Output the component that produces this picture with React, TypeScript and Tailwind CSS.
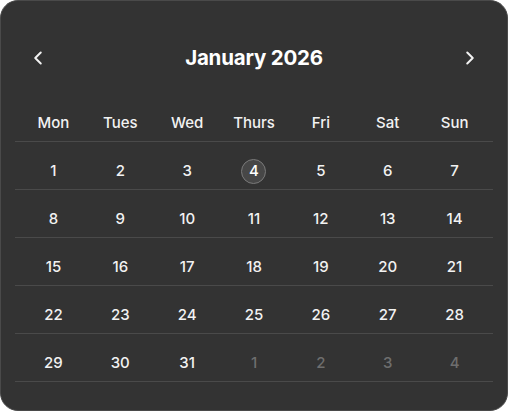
import React from 'react';
import { ChevronLeft, ChevronRight } from 'lucide-react';

const days = ['Mon', 'Tues', 'Wed', 'Thurs', 'Fri', 'Sat', 'Sun'];

// jan 2026 starts on a thursday, but the grid here starts at 1 on monday
const weeks: { n: number; muted?: boolean }[][] = [
  [1, 2, 3, 4, 5, 6, 7].map((n) => ({ n })),
  [8, 9, 10, 11, 12, 13, 14].map((n) => ({ n })),
  [15, 16, 17, 18, 19, 20, 21].map((n) => ({ n })),
  [22, 23, 24, 25, 26, 27, 28].map((n) => ({ n })),
  [
    { n: 29 },
    { n: 30 },
    { n: 31 },
    { n: 1, muted: true },
    { n: 2, muted: true },
    { n: 3, muted: true },
    { n: 4, muted: true },
  ],
];

const today = 4;

export default function App() {
  return (
    <div className="w-[509px] h-[412px] bg-white" style={{ fontFamily: 'Inter, "Liberation Sans", sans-serif' }}>
      <div className="w-[508px] h-[411px] rounded-[18px] bg-[#333333] border border-[#4a4a4a] overflow-hidden">
        {/* header */}
        <div className="mt-[43px] h-[28px] flex items-center justify-between px-[26px]">
          <button className="text-[#f2f2f2]" aria-label="Previous month">
            <ChevronLeft size={22} strokeWidth={2.2} />
          </button>
          <div className="text-[20.5px] font-bold text-white tracking-[-0.2px]">January 2026</div>
          <button className="text-[#f2f2f2]" aria-label="Next month">
            <ChevronRight size={22} strokeWidth={2.2} />
          </button>
        </div>

        <div className="mx-[14px]">
          {/* weekday names */}
          <div className="mt-[41px] pb-[8px] border-b border-[#4a4a4a] grid grid-cols-7 px-[5px]">
            {days.map((d) => (
              <div key={d} className="h-[20px] flex items-center justify-center text-[15px] font-medium text-[#f2f2f2]">
                {d}
              </div>
            ))}
          </div>

          {weeks.map((week, i) => (
            <div key={i} className="pt-[17px] pb-[5px] border-b border-[#4a4a4a] grid grid-cols-7 px-[5px]">
              {week.map((d, j) => (
                <div key={j} className="h-[25px] flex items-center justify-center">
                  {!d.muted && d.n === today && i === 0 ? (
                    <span className="w-[25px] h-[25px] rounded-full border border-[#7a7a7a] bg-[#474747] flex items-center justify-center text-[15px] font-medium text-white">
                      {d.n}
                    </span>
                  ) : (
                    <span className={`text-[15px] font-medium ${d.muted ? 'text-[#6e6e6e]' : 'text-[#f2f2f2]'}`}>
                      {d.n}
                    </span>
                  )}
                </div>
              ))}
            </div>
          ))}
        </div>
      </div>
    </div>
  );
}
